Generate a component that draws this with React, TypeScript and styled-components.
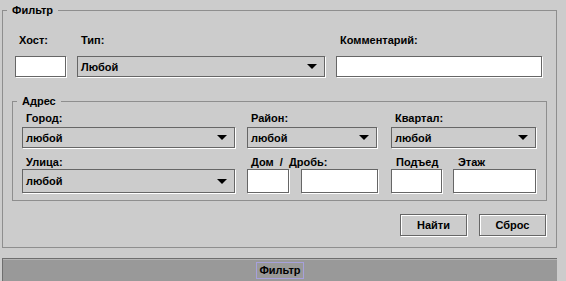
import styled, { createGlobalStyle } from "styled-components";

const GlobalStyle = createGlobalStyle`
  body {
    margin: 0;
    background: #cccccc;
    font-family: "Liberation Sans", Arial, sans-serif;
    font-size: 11px;
    font-weight: bold;
    color: #000;
  }
`;

const Page = styled.div`
  width: 566px;
  height: 281px;
  overflow: hidden;
  display: flex;
  flex-direction: column;
`;

const Group = styled.fieldset<{ $outer?: boolean }>`
  margin: ${({ $outer }) => ($outer ? "4px 9px 0 2px" : "18px 0 0 0")};
  padding: ${({ $outer }) => ($outer ? "17px 9px 11px 9px" : "0 9px 7px 9px")};
  border: 1px solid #8e8e8e;
  min-width: 0;
`;

const Legend = styled.legend`
  padding: 0 5px;
  margin-left: -5px;
  line-height: 13px;
`;

const TopGrid = styled.div`
  display: grid;
  grid-template-columns: 51px 248px 206px;
  column-gap: 11px;
  row-gap: 9px;
  margin-left: 3px;
`;

const Label = styled.div`
  padding-left: 4px;
  line-height: 13px;
  white-space: pre;
`;

const TextBox = styled.input<{ $h?: number }>`
  box-sizing: border-box;
  display: block;
  width: 100%;
  height: ${({ $h }) => $h ?? 21}px;
  margin: 0;
  padding: 0 3px;
  background: #fff;
  border: 1px solid #666666;
  border-radius: 0;
  box-shadow: 1px 1px 0 #ffffff;
  font: inherit;
  outline: none;
`;

const Combo = styled.div<{ $h?: number }>`
  box-sizing: border-box;
  display: flex;
  align-items: center;
  justify-content: space-between;
  height: ${({ $h }) => $h ?? 21}px;
  padding: 0 7px 0 3px;
  border: 1px solid #666666;
  box-shadow: 1px 1px 0 #ffffff;
  background: #cccccc;
`;

const Arrow = styled.span`
  width: 0;
  height: 0;
  border-left: 5px solid transparent;
  border-right: 5px solid transparent;
  border-top: 5px solid #000;
`;

const Row = styled.div<{ $top?: number }>`
  display: flex;
  margin-top: ${({ $top }) => $top ?? 0}px;
`;

const Field = styled.div<{ $w: number; $gap?: number }>`
  width: ${({ $w }) => $w}px;
  margin-left: ${({ $gap }) => $gap ?? 0}px;
  display: flex;
  flex-direction: column;
  gap: 2px;
`;

const Cell = styled.div<{ $w: number; $gap?: number }>`
  width: ${({ $w }) => $w}px;
  margin-left: ${({ $gap }) => $gap ?? 0}px;
`;

const Buttons = styled.div`
  display: flex;
  justify-content: flex-end;
  gap: 12px;
  margin: 13px 1px 0 0;
`;

const Button = styled.button`
  box-sizing: border-box;
  width: 67px;
  height: 22px;
  padding: 0;
  background: #cccccc;
  border: 1px solid #666666;
  border-radius: 0;
  box-shadow: inset 1px 1px 0 #ffffff, 1px 1px 0 #ffffff;
  font: inherit;
  color: #000;
`;

const TabBar = styled.div`
  box-sizing: border-box;
  margin: 10px 9px 0 2px;
  height: 25px;
  background: #999999;
  border-top: 1px solid #6e6e6e;
  border-left: 1px solid #6e6e6e;
  box-shadow: inset 0 1px 0 #b4b4b4;
  display: flex;
  align-items: center;
  justify-content: center;
`;

const TabTitle = styled.span`
  padding: 1px 2px;
  line-height: 13px;
  border: 1px solid #a6a0dc;
`;

export default function App() {
  return (
    <Page>
      <GlobalStyle />
      <Group $outer>
        <Legend>Фильтр</Legend>
        <TopGrid>
          <Label>Хост:</Label>
          <Label>Тип:</Label>
          <Label>Комментарий:</Label>
          <TextBox />
          <Combo>
            <span>Любой</span>
            <Arrow />
          </Combo>
          <TextBox />
        </TopGrid>

        <Group>
          <Legend>Адрес</Legend>
          <Row $top={4}>
            <Field $w={213}>
              <Label>Город:</Label>
              <Combo>
                <span>любой</span>
                <Arrow />
              </Combo>
            </Field>
            <Field $w={130} $gap={12}>
              <Label>Район:</Label>
              <Combo>
                <span>любой</span>
                <Arrow />
              </Combo>
            </Field>
            <Field $w={145} $gap={14}>
              <Label>Квартал:</Label>
              <Combo>
                <span>любой</span>
                <Arrow />
              </Combo>
            </Field>
          </Row>

          <Row $top={8}>
            <Cell $w={213}>
              <Label>Улица:</Label>
            </Cell>
            <Cell $w={132} $gap={12}>
              <Label>Дом  /  Дробь:</Label>
            </Cell>
            <Cell $w={51} $gap={13}>
              <Label>Подъед</Label>
            </Cell>
            <Cell $w={83} $gap={11}>
              <Label>Этаж</Label>
            </Cell>
          </Row>
          <Row>
            <Cell $w={213}>
              <Combo $h={24}>
                <span>любой</span>
                <Arrow />
              </Combo>
            </Cell>
            <Cell $w={42} $gap={12}>
              <TextBox $h={24} />
            </Cell>
            <Cell $w={77} $gap={12}>
              <TextBox $h={24} />
            </Cell>
            <Cell $w={51} $gap={13}>
              <TextBox $h={24} />
            </Cell>
            <Cell $w={83} $gap={11}>
              <TextBox $h={24} />
            </Cell>
          </Row>
        </Group>

        <Buttons>
          <Button>Найти</Button>
          <Button>Сброс</Button>
        </Buttons>
      </Group>

      <TabBar>
        <TabTitle>Фильтр</TabTitle>
      </TabBar>
    </Page>
  );
}
